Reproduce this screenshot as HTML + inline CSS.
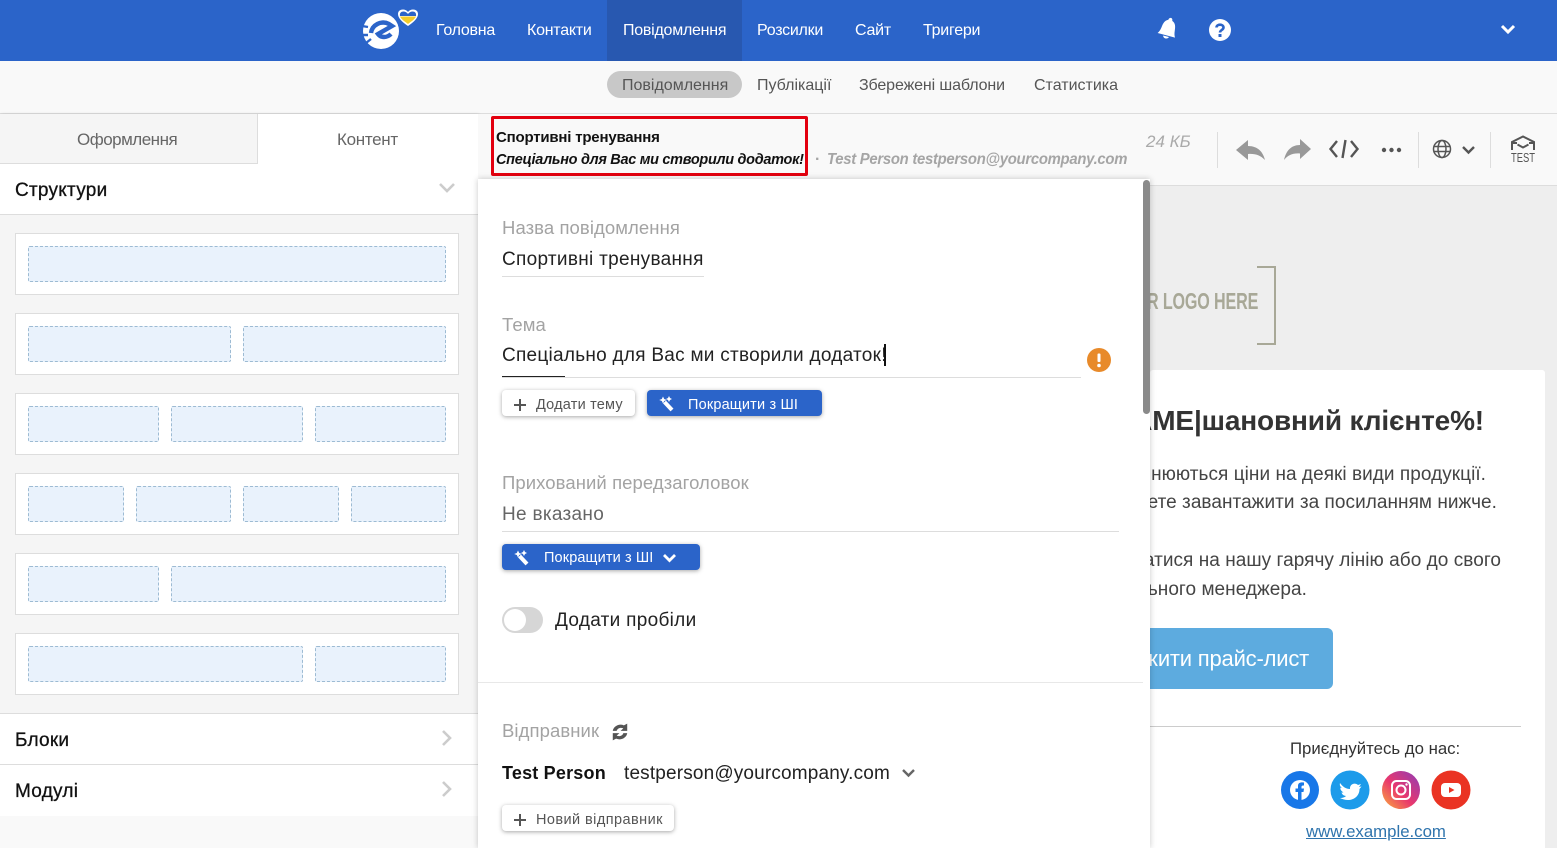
<!DOCTYPE html>
<html lang="uk"><head><meta charset="utf-8"><title>Редактор</title>
<style>
html,body{margin:0;padding:0;width:1557px;height:848px;overflow:hidden;background:#f9f9f9;font-family:"Liberation Sans",sans-serif;color:#333}
.a{position:absolute;white-space:nowrap}
.abs{position:absolute}
.nav{top:21px;font-size:16px;line-height:20px;color:#fff;letter-spacing:-.25px}
.sub{top:76px;font-size:16px;line-height:20px;color:#555}
.card{position:absolute;left:15px;width:442px;height:60px;background:#fff;border:1px solid #ddd}
.c{position:absolute;top:12px;height:34px;background:#e9f2fc;border:1px dashed #9dbbd3;border-radius:2px}
.lab{font-size:18.5px;line-height:22px;color:#a3a3a3;letter-spacing:.08px}
.val{font-size:19px;line-height:24px;color:#222;letter-spacing:.3px;margin-top:1px}
.sec{font-size:19px;line-height:24px;color:#111;letter-spacing:.25px;-webkit-text-stroke:.3px #111}
.btn{position:absolute;height:26px;border-radius:4px;box-shadow:0 1px 4px rgba(0,0,0,.35);font-size:14.5px;line-height:30px;white-space:nowrap}
.w{background:#fff;color:#555}
.b{background:#2b64c9;color:#fff}
.line{position:absolute;height:1px;background:#ddd}
.et{font-size:19px;line-height:28px;color:#444;letter-spacing:.05px}
</style></head><body>

<!-- top bar -->
<div class="abs" style="left:0;top:0;width:1557px;height:61px;background:#2b64c9"></div>
<div class="abs" style="left:607px;top:0;width:135px;height:61px;background:#2858b0"></div>
<svg class="abs" style="left:360px;top:6px" width="60" height="46" viewBox="0 0 60 46">
<circle cx="21" cy="25" r="18" fill="#fff"/>
<path d="M11 27 C12 19 21 14 29 18 L32 20 L18 28 C21 32 27 32 31 28" fill="none" stroke="#2b64c9" stroke-width="4.4"/>
<path d="M2 20 L8 21 M2 29 L8 29 M6 37 L11 33" stroke="#2b64c9" stroke-width="2.4"/>
<path d="M48 20 C42 16 38 12 38 8 C38 3 45 2 48 6 C51 2 58 3 58 8 C58 12 54 16 48 20Z" fill="#fff"/>
<path d="M48 18 C44 15 41 13 40 10.500 L56 10.500 C55 13 52 15 48 18Z" fill="#f4cd2a"/>
<path d="M40 10 C39 5 45 4 48 8 C51 4 57 5 56 10Z" fill="#2b64c9"/>
</svg>
<div class="a nav" style="left:436px">Головна</div>
<div class="a nav" style="left:527px">Контакти</div>
<div class="a nav" style="left:623px">Повідомлення</div>
<div class="a nav" style="left:757px">Розсилки</div>
<div class="a nav" style="left:855px">Сайт</div>
<div class="a nav" style="left:923px">Тригери</div>
<svg class="abs" style="left:1156px;top:16px;transform:rotate(15deg)" width="24" height="26" viewBox="0 0 24 26"><path d="M12 1.500 C13.500 1.500 14 3 14 4 C18 5.500 18.500 9 19 13 C19.300 16 20 18 21 19.500 L3 19.500 C4 18 5 16 5.300 13 C5.800 9 6.500 5.500 10 4 C10 3 10.500 1.500 12 1.500Z M9 20.500 L15 20.500 C14.500 23.500 9.500 23.500 9 20.500Z" fill="#fff"/></svg>
<svg class="abs" style="left:1208px;top:18px" width="24" height="24" viewBox="0 0 24 24"><circle cx="12" cy="12" r="11" fill="#fff"/><path d="M8.500 9.500 C8.500 5.800 15.500 5.800 15.500 9.500 C15.500 12 12 12 12 14.500" fill="none" stroke="#2b64c9" stroke-width="2.600"/><rect x="10.500" y="16" width="3" height="3" fill="#2b64c9"/></svg>
<svg class="abs" style="left:1500px;top:23px" width="16" height="12" viewBox="0 0 16 12"><path d="M2 3 L8 9 L14 3" fill="none" stroke="#fff" stroke-width="3"/></svg>

<!-- sub nav -->
<div class="abs" style="left:607px;top:71px;width:135px;height:27px;background:#c8c8c8;border-radius:14px"></div>
<div class="a sub" style="left:622px;color:#555">Повідомлення</div>
<div class="a sub" style="left:757px">Публікації</div>
<div class="a sub" style="left:859px;letter-spacing:-.12px">Збережені шаблони</div>
<div class="a sub" style="left:1034px">Статистика</div>
<div class="line" style="left:0;top:113px;width:1557px"></div>

<!-- left panel -->
<div class="abs" style="left:0;top:114px;width:478px;height:734px;background:#f5f5f5;box-shadow:1px 0 3px rgba(0,0,0,.12)"></div>
<div class="abs" style="left:0;top:114px;width:257px;height:49px;background:#f5f5f5;border-right:1px solid #ddd;border-bottom:1px solid #ddd"></div>
<div class="abs" style="left:258px;top:114px;width:220px;height:50px;background:#fff"></div>
<div class="a" style="left:77px;top:129px;font-size:17px;line-height:22px;color:#666;letter-spacing:-.5px">Оформлення</div>
<div class="a" style="left:337px;top:129px;font-size:17px;line-height:22px;color:#666;letter-spacing:-.3px">Контент</div>
<div class="abs" style="left:0;top:164px;width:478px;height:50px;background:#fff;border-bottom:1px solid #ddd"></div>
<div class="a sec" style="left:15px;top:178.500px">Структури</div>
<svg class="abs" style="left:438px;top:182px" width="18" height="12" viewBox="0 0 18 12"><path d="M2 2 L9 9 L16 2" fill="none" stroke="#ccc" stroke-width="2.600"/></svg>

<div class="card" style="top:233px"><div class="c" style="left:12px;width:416px"></div></div>
<div class="card" style="top:313px"><div class="c" style="left:12px;width:201px"></div><div class="c" style="left:227px;width:201px"></div></div>
<div class="card" style="top:393px"><div class="c" style="left:12px;width:129px"></div><div class="c" style="left:155px;width:130px"></div><div class="c" style="left:299px;width:129px"></div></div>
<div class="card" style="top:473px"><div class="c" style="left:12px;width:94px"></div><div class="c" style="left:120px;width:93px"></div><div class="c" style="left:227px;width:94px"></div><div class="c" style="left:335px;width:93px"></div></div>
<div class="card" style="top:553px"><div class="c" style="left:12px;width:129px"></div><div class="c" style="left:155px;width:273px"></div></div>
<div class="card" style="top:633px"><div class="c" style="left:12px;width:273px"></div><div class="c" style="left:299px;width:129px"></div></div>

<div class="abs" style="left:0;top:713px;width:478px;height:102px;background:#fff;border-top:1px solid #ddd;border-bottom:1px solid #ddd"></div>
<div class="line" style="left:0;top:764px;width:478px"></div>
<div class="abs" style="left:0;top:816px;width:478px;height:32px;background:#f9f9f9"></div>
<div class="a sec" style="left:15px;top:729px">Блоки</div>
<div class="a sec" style="left:15px;top:780px">Модулі</div>
<svg class="abs" style="left:440px;top:729px" width="14" height="18" viewBox="0 0 14 18"><path d="M3 2 L10 9 L3 16" fill="none" stroke="#ccc" stroke-width="2.600"/></svg>
<svg class="abs" style="left:440px;top:780px" width="14" height="18" viewBox="0 0 14 18"><path d="M3 2 L10 9 L3 16" fill="none" stroke="#ccc" stroke-width="2.600"/></svg>

<!-- preview background -->
<div class="abs" style="left:478px;top:185px;width:1079px;height:663px;background:#eee"></div>
<div class="line" style="left:478px;top:185px;width:1079px"></div>
<svg class="abs" style="left:1150px;top:264px" width="130" height="84" viewBox="0 0 130 84"><path d="M107 3 H125 V80 H107" fill="none" stroke="#a8a897" stroke-width="2"/></svg>
<div class="a" style="left:1147px;top:287px;font-size:23px;line-height:28px;font-weight:bold;color:#a8a897;letter-spacing:-.2px;transform:scaleX(.70);transform-origin:0 0">R LOGO HERE</div>

<div class="abs" style="left:1150px;top:370px;width:395px;height:478px;background:#fff;border-radius:3px 3px 0 0;overflow:hidden">
  <div class="a" style="right:61px;top:34px;font-size:28px;line-height:34px;font-weight:bold;color:#333;letter-spacing:-.15px">АМЕ|шановний клієнте%!</div>
  <div class="a et" style="right:59px;top:91px">змінюються ціни на деякі види продукції.</div>
  <div class="a et" style="right:48px;top:119px">можете завантажити за посиланням нижче.</div>
  <div class="a et" style="right:44px;top:177px">звертатися на нашу гарячу лінію або до свого</div>
  <div class="a et" style="right:238px;top:206px">персонального менеджера.</div>
  <div class="abs" style="left:0;top:258px;width:183px;height:61px;background:#5dabdf;border-radius:0 6px 6px 0"></div>
  <div class="a" style="right:236px;top:275px;font-size:22px;line-height:28px;color:#fff;letter-spacing:-.2px">Завантажити прайс-лист</div>
  <div class="abs" style="left:0;top:356px;width:371px;height:1px;background:#ccc"></div>
</div>
<div class="a" style="left:1290px;top:739px;font-size:16.8px;line-height:20px;color:#333">Приєднуйтесь до нас:</div>
<svg class="abs" style="left:1280px;top:770px" width="194" height="42" viewBox="0 0 194 42">
<defs><linearGradient id="ig" x1="0" y1="1" x2="1" y2="0"><stop offset="0" stop-color="#fbb03b"/><stop offset=".45" stop-color="#e9386d"/><stop offset="1" stop-color="#8d3bb8"/></linearGradient></defs>
<circle cx="20" cy="20" r="19" fill="#1877e8"/><circle cx="20" cy="20" r="10" fill="#fff"/><path d="M18 31 V22 H15.500 V18.500 H18 V16 C18 13 20 12 24 12.500 V15.500 C22 15.300 21.500 15.800 21.500 17 V18.500 H24 L23.500 22 H21.500 V31Z" fill="#1877e8"/>
<circle cx="70" cy="20" r="19.500" fill="#1d9bea"/><path d="M60 13 C63 17 66 19 70 19 C69.500 14 75 12 78 15 L81 14 L79 17 L81.500 16.500 L79.500 19 C79.500 26 74 30 68 30 C65 30 62 29 60 28 C63 28 65 27 66 26 C63 25.500 62 24 61.500 22.500 L63.500 22.500 C61 21 60 19 60.500 17.500 L62 18 C60 16.500 59.500 15 60 13Z" fill="#fff"/>
<circle cx="121" cy="20" r="19" fill="url(#ig)"/><rect x="112" y="11" width="18" height="18" rx="4.500" fill="none" stroke="#fff" stroke-width="2"/><circle cx="121" cy="20" r="4.500" fill="none" stroke="#fff" stroke-width="2"/><circle cx="126.500" cy="14.500" r="1.200" fill="#fff"/>
<circle cx="171" cy="20" r="19.500" fill="#ea3323"/><rect x="161" y="13" width="20" height="14" rx="4" fill="#fff"/><path d="M169 17 L174.500 20 L169 23Z" fill="#ea3323"/>
</svg>
<div class="a" style="left:1306px;top:821px;font-size:16.8px;line-height:21px;color:#2f74ad;text-decoration:underline">www.example.com</div>

<!-- header strip -->
<div class="abs" style="left:478px;top:114px;width:1079px;height:71px;background:#f9f9f9"></div>
<div class="abs" style="left:491px;top:116px;width:311px;height:54px;border:3px solid #e3000f;border-radius:2px"></div>
<div class="a" style="left:496px;top:128px;font-size:15px;line-height:20px;font-weight:bold;color:#111;letter-spacing:-.2px">Спортивні тренування</div>
<div class="a" style="left:496px;top:150px;font-size:15px;line-height:20px;font-weight:bold;font-style:italic;color:#111;letter-spacing:-.3px;transform:scaleX(.965);transform-origin:0 0">Спеціально для Вас ми створили додаток!</div>
<div class="a" style="left:815px;top:150px;font-size:16px;line-height:20px;font-weight:bold;color:#a5a5a5">·</div>
<div class="a" style="left:827px;top:150px;font-size:16px;line-height:20px;font-weight:bold;font-style:italic;color:#a5a5a5;letter-spacing:-.3px;transform:scaleX(.929);transform-origin:0 0">Test Person testperson@yourcompany.com</div>
<div class="a" style="left:1146px;top:131px;font-size:17px;line-height:21px;font-style:italic;color:#aaa">24 КБ</div>
<div class="abs" style="left:1217px;top:132px;width:1px;height:36px;background:#ddd"></div>
<div class="abs" style="left:1418px;top:132px;width:1px;height:36px;background:#ddd"></div>
<div class="abs" style="left:1490px;top:132px;width:1px;height:36px;background:#ddd"></div>
<svg class="abs" style="left:1234px;top:136px" width="32" height="26" viewBox="0 0 32 26"><path d="M2 14 L14 4 V10 C24 10 29 16 31 24 C26 19 21 17.500 14 18 V24Z" fill="#999"/></svg>
<svg class="abs" style="left:1283px;top:136px" width="30" height="26" viewBox="0 0 30 26"><path d="M28 13 L17 3 V9 C8 9 3 15 1 24 C5 19 10 17 17 17.500 V23Z" fill="#999"/></svg>
<svg class="abs" style="left:1328px;top:138px" width="32" height="22" viewBox="0 0 32 22"><path d="M9 3 L2.500 11 L9 19 M23 3 L29.500 11 L23 19 M17.500 2 L14.500 20" fill="none" stroke="#555" stroke-width="2.400"/></svg>
<svg class="abs" style="left:1381px;top:146px" width="22" height="8" viewBox="0 0 22 8"><circle cx="3" cy="4" r="2.200" fill="#555"/><circle cx="10.500" cy="4" r="2.200" fill="#555"/><circle cx="18" cy="4" r="2.200" fill="#555"/></svg>
<svg class="abs" style="left:1431px;top:138px" width="22" height="22" viewBox="0 0 22 22" fill="none" stroke="#555" stroke-width="1.500"><circle cx="11" cy="11" r="8.500"/><ellipse cx="11" cy="11" rx="4" ry="8.500"/><path d="M2.500 8.500 H19.500 M2.500 13.500 H19.500"/></svg>
<svg class="abs" style="left:1461px;top:145px" width="15" height="10" viewBox="0 0 15 10"><path d="M2 2 L7.500 7.500 L13 2" fill="none" stroke="#555" stroke-width="2.400"/></svg>
<svg class="abs" style="left:1508px;top:134px" width="30" height="30" viewBox="0 0 30 30"><path d="M4 16 V8 L15 2.500 L26 8 V16 M4.500 9 H9 M25.500 9 H21 M9.500 10.500 L15 13.500 L20.500 10.500" fill="none" stroke="#555" stroke-width="2"/><text x="15" y="28" text-anchor="middle" font-family="Liberation Sans,sans-serif" font-size="13" fill="#555" textLength="24" lengthAdjust="spacingAndGlyphs">TEST</text></svg>

<!-- form panel -->
<div class="abs" style="left:478px;top:179px;width:672px;height:669px;background:#fff;box-shadow:0 0 6px rgba(0,0,0,.22)"></div>
<div class="abs" style="left:1143px;top:180px;width:7px;height:234px;background:#8a8a8a;border-radius:4px"></div>
<div class="a lab" style="left:502px;top:217px">Назва повідомлення</div>
<div class="a val" style="left:502px;top:247px">Спортивні тренування</div>
<div class="line" style="left:502px;top:276px;width:202px"></div>
<div class="a lab" style="left:502px;top:314px">Тема</div>
<div class="a val" style="left:502px;top:343px;letter-spacing:.27px">Спеціально для Вас ми створили додаток!</div>
<div class="abs" style="left:884px;top:344px;width:2px;height:22px;background:#111"></div>
<div class="line" style="left:502px;top:377px;width:579px"></div>
<div class="abs" style="left:502px;top:376px;width:63px;height:1px;background:#222"></div>
<svg class="abs" style="left:1087px;top:348px" width="24" height="24" viewBox="0 0 24 24"><circle cx="12" cy="12" r="12" fill="#e88a2a"/><rect x="10.500" y="5.500" width="3" height="8.500" rx="1" fill="#fff"/><circle cx="12" cy="17.500" r="1.800" fill="#fff"/></svg>

<div class="btn w" style="left:502px;top:390px;width:133px"><span class="abs" style="left:34px;top:0;letter-spacing:.2px">Додати тему</span></div>
<svg class="abs" style="left:513px;top:398px" width="14" height="14" viewBox="0 0 14 14"><path d="M7 1 V13 M1 7 H13" stroke="#555" stroke-width="2"/></svg>
<div class="btn b" style="left:647px;top:390px;width:175px"><span class="abs" style="left:41px;top:0;letter-spacing:.17px">Покращити з ШІ</span></div>
<svg class="abs" style="left:659px;top:396px" width="16" height="16" viewBox="0 0 16 16"><path d="M5.500 6 L13 14" stroke="#fff" stroke-width="4"/><path d="M4 0.500 L5.200 3 L7.800 4 L5.200 5 L4 7.500 L2.800 5 L0.200 4 L2.800 3Z M10 0 L11 2 L13 3 L11 4 L10 6 L9 4 L7 3 L9 2Z" fill="#fff"/></svg>

<div class="a lab" style="left:502px;top:472px">Прихований передзаголовок</div>
<div class="a val" style="left:502px;top:502px;color:#666">Не вказано</div>
<div class="line" style="left:502px;top:531px;width:617px"></div>
<div class="btn b" style="left:502px;top:544px;width:198px;line-height:28px"><span class="abs" style="left:42px;top:0;letter-spacing:.12px">Покращити з ШІ</span></div>
<svg class="abs" style="left:514px;top:550px" width="16" height="16" viewBox="0 0 16 16"><path d="M5.500 6 L13 14" stroke="#fff" stroke-width="4"/><path d="M4 0.500 L5.200 3 L7.800 4 L5.200 5 L4 7.500 L2.800 5 L0.200 4 L2.800 3Z M10 0 L11 2 L13 3 L11 4 L10 6 L9 4 L7 3 L9 2Z" fill="#fff"/></svg>
<svg class="abs" style="left:662px;top:553px" width="15" height="10" viewBox="0 0 15 10"><path d="M2 2 L7.500 7.500 L13 2" fill="none" stroke="#fff" stroke-width="2.800"/></svg>

<div class="abs" style="left:502px;top:607px;width:41px;height:26px;background:#d6d6d6;border-radius:13px"></div>
<div class="abs" style="left:504px;top:609px;width:22px;height:22px;background:#fff;border-radius:50%"></div>
<div class="a val" style="left:555px;top:608px;color:#222">Додати пробіли</div>
<div class="line" style="left:478px;top:682px;width:665px;background:#e8e8e8"></div>

<div class="a lab" style="left:502px;top:720px">Відправник</div>
<svg class="abs" style="left:610px;top:722px" width="20" height="20" viewBox="0 0 18 18"><path d="M2.500 8 C3 4 8 1 12.500 3 L15.500 1.500 V8 H9.500 L12 5.700 C9 4.500 6.500 6 6 8Z M15.500 10 C15 14 10 17 5.500 15 L2.500 16.500 V10 H8.500 L6 12.300 C9 13.500 11.500 12 12 10Z" fill="#555"/></svg>
<div class="a" style="left:502px;top:761px;font-size:18px;line-height:24px;font-weight:bold;color:#111;letter-spacing:.2px">Test Person</div>
<div class="a val" style="left:624px;top:761px;color:#222;letter-spacing:.16px">testperson@yourcompany.com</div>
<svg class="abs" style="left:901px;top:768px" width="15" height="10" viewBox="0 0 15 10"><path d="M2 2 L7.500 7.500 L13 2" fill="none" stroke="#666" stroke-width="2.400"/></svg>
<div class="btn w" style="left:502px;top:805px;width:172px"><span class="abs" style="left:34px;top:0;letter-spacing:.43px">Новий відправник</span></div>
<svg class="abs" style="left:513px;top:813px" width="14" height="14" viewBox="0 0 14 14"><path d="M7 1 V13 M1 7 H13" stroke="#555" stroke-width="2"/></svg>
</body></html>
